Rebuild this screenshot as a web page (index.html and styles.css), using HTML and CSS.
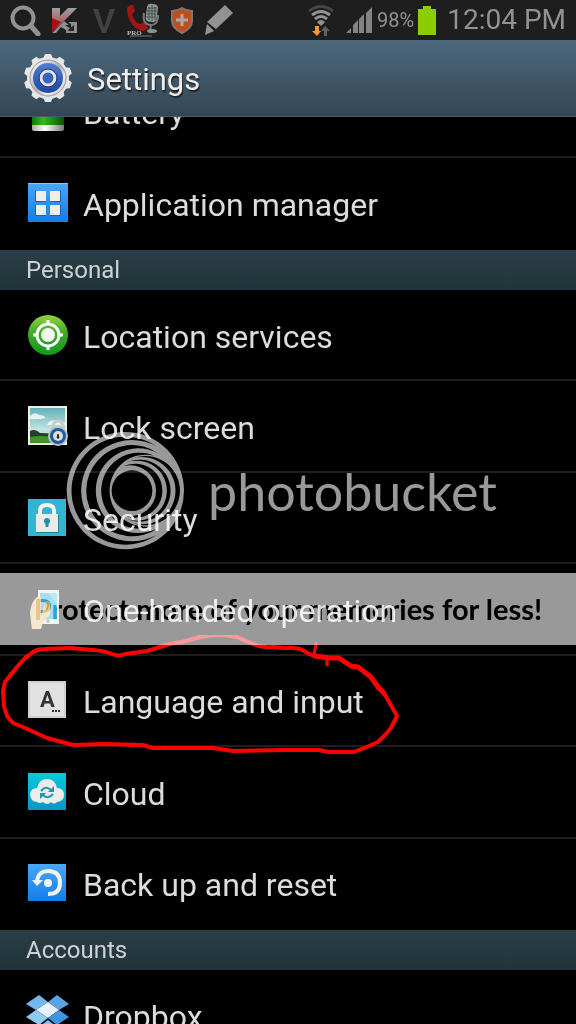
FILE: index.html
```html
<!DOCTYPE html>
<html lang="en">
<head>
<meta charset="utf-8">
<meta name="viewport" content="width=device-width, initial-scale=1">
<title>Settings</title>
<link rel="stylesheet" href="styles.css">
</head>
<body>
<div class="screen">
  <div class="status">
    <div class="status-left">
      <svg width="32" height="32" viewBox="0 0 32 32"><circle cx="14" cy="14" r="10.500" fill="none" stroke="#929292" stroke-width="4"/><path d="M22 22l7 8" stroke="#929292" stroke-width="5" stroke-linecap="round"/></svg>
      <svg width="27" height="28" viewBox="0 0 27 28"><defs><linearGradient id="kas" x2="0" y2="1"><stop offset="0" stop-color="#a0a0a0"/><stop offset=".5" stop-color="#a86b6b"/><stop offset="1" stop-color="#a81414"/></linearGradient></defs><path d="M1 2h8v8l8-8h9L13 15 1 26z" fill="url(#kas)"/><path d="M1 12l9 4-9 10z" fill="#ab1010"/><path d="M1 27l12-12 5 4h-4l6 4v-5l-3-2h9v11H15v-3l-5-3-5 6z" fill="#8e8e8e"/><path d="M17 24l6-5v6h-6z" fill="#222"/></svg>
      <svg width="24" height="28" viewBox="0 0 24 28"><path d="M1 3h5l6 19 6-19h5l-9 24h-4z" fill="#424242"/></svg>
      <svg width="34" height="34" viewBox="0 0 34 34"><path d="M1 5q3-4 6-3l2 6-3 3q2 8 8 10l4-2 4 6-4 3q-7 0-12-7T1 5z" fill="#9e1715"/><rect x="20" y="1" width="11" height="18" rx="4" fill="#8d9494" transform="rotate(8 26 12)"/><path d="M22 5h9M21 8h10M21 11h9M20 14h9M26 2v16M23 4v13M29 4v13" stroke="#455051"/><path d="M18 10q-2 11 6 12t8-10M25 22l-1 6" fill="none" stroke="#777" stroke-width="2"/><ellipse cx="26" cy="28" rx="5" ry="2" fill="#8a8f8f"/><path d="M4 33h22" stroke="#777"/><text x="1" y="32" class="pro">PRO</text></svg>
      <svg width="24" height="28" viewBox="0 0 24 28"><path d="M12 2q5 3 10 3v10q0 7-10 12Q2 22 2 15V5q5 0 10-3z" fill="#bd4e1d" stroke="#85746b" stroke-width="2"/><path d="M12 8v12M6 14h12" stroke="#aaa" stroke-width="3"/></svg>
      <svg width="30" height="32" viewBox="0 0 30 32"><path d="M21 1l8 8-17 16-9-7z" fill="#929292"/><path d="M3 20l7 7-9 4z" fill="#929292"/></svg>
    </div>
    <div class="status-right">
      <svg width="28" height="32" viewBox="0 0 28 32"><path d="M2 7Q14-2 26 7" fill="none" stroke="#454545" stroke-width="3"/><path d="M5 11q9-7 18 0M8 15q6-5 12 0M11 19q3-3 6 0" fill="none" stroke="#929292" stroke-width="3"/><path d="M14 22l-3-3h6z" fill="#929292"/><path d="M17 32v-5h-3l4-5 5 5h-3v5z" fill="#606060"/><path d="M8 22h4v5h2l-4 5-5-5h3z" fill="#f5992e"/></svg>
      <svg class="signal" width="28" height="28" viewBox="0 0 28 28"><path d="M1 27h5v-5zM8 27h5V14l-5 5zM14 27h5V8l-5 5zM21 27h6V1l-6 6z" fill="#838383"/></svg>
      <span class="percent">98%</span>
      <svg width="20" height="30" viewBox="0 0 20 30"><path d="M1 4h5V1h8v3h5v26H1z" fill="#8ccd00"/></svg>
      <span class="clock">12:04 PM</span>
    </div>
  </div>

  <header class="titlebar">
    <svg width="50" height="50" viewBox="0 0 50 50"><defs><linearGradient id="silver" x2="1" y2="1"><stop offset="0" stop-color="#fff"/><stop offset=".3" stop-color="#d7d7d7"/><stop offset=".5" stop-color="#aaa"/><stop offset=".7" stop-color="#eee"/><stop offset="1" stop-color="#bbb"/></linearGradient><linearGradient id="ring" x2="0" y2="1"><stop offset="0" stop-color="#557cd2"/><stop offset="1" stop-color="#1c45a5"/></linearGradient></defs><g fill="#e6e6e6"><circle cx="25" cy="25" r="21"/><g id="teeth"><path id="tooth" d="M20 6l2-5h6l2 5zM20 44l2 5h6l2-5z"/><use href="#tooth" transform="rotate(36 25 25)"/><use href="#tooth" transform="rotate(72 25 25)"/><use href="#tooth" transform="rotate(108 25 25)"/><use href="#tooth" transform="rotate(144 25 25)"/></g></g><circle cx="25" cy="25" r="18" fill="url(#silver)" stroke="#999"/><circle cx="25" cy="25" r="15" fill="url(#ring)"/><circle cx="25" cy="25" r="7" fill="#3962bb" stroke="#e3e3e3" stroke-width="3"/><circle cx="25" cy="25" r="9" fill="none" stroke="#27427c"/></svg>
    <h1>Settings</h1>
  </header>

  <main class="list">
    <nav class="group device">
      <a class="row" href="#battery"><svg width="40" height="40" viewBox="0 0 40 40"><defs><linearGradient id="bat"><stop offset="0" stop-color="#147500"/><stop offset=".35" stop-color="#37b916"/><stop offset="1" stop-color="#0b5200"/></linearGradient><linearGradient id="cap"><stop offset="0" stop-color="#aaa"/><stop offset=".4" stop-color="#fff"/><stop offset="1" stop-color="#777"/></linearGradient></defs><rect x="4" y="2" width="32" height="38" rx="2" fill="url(#cap)"/><path d="M4 8h32v26H4z" fill="url(#bat)"/></svg><span>Battery</span></a>
      <a class="row" href="#apps"><svg width="40" height="40" viewBox="0 0 40 40"><defs><linearGradient id="blue" x2="0" y2="1"><stop offset="0" stop-color="#4ba6f7"/><stop offset="1" stop-color="#107fe8"/></linearGradient></defs><path d="M0 0h40v39H0z" fill="url(#blue)"/><path d="M0 .5h40" stroke="#8cc5f7"/><path d="M7 8h11v11H7zM22 8h11v11H22zM7 22h11v11H7zM22 22h11v11H22z" fill="#1464b3"/><path d="M8 8h10v10H8zM22 8h10v10H22zM8 22h10v10H8zM22 22h10v10H22z" fill="#eeede8"/></svg><span>Application manager</span></a>
    </nav>

    <h2>Personal</h2>
    <nav class="group personal">
      <a class="row" href="#location"><svg width="40" height="40" viewBox="0 0 40 40"><defs><linearGradient id="green" x2="0" y2="1"><stop offset="0" stop-color="#8ed33e"/><stop offset=".5" stop-color="#3aa526"/><stop offset="1" stop-color="#119a1e"/></linearGradient></defs><circle cx="20" cy="20" r="20" fill="url(#green)"/><circle cx="20" cy="20" r="11" fill="none" stroke="#fff" stroke-width="3"/><circle cx="20" cy="20" r="7" fill="#f6f6f6"/><path d="M20 5v5M20 30v5M5 20h5M30 20h5" stroke="#fff" stroke-width="3"/></svg><span>Location services</span></a>
      <a class="row" href="#lock"><svg width="40" height="40" viewBox="0 0 40 40"><defs><linearGradient id="sky" x2="0" y2="1"><stop offset="0" stop-color="#64b0b8"/><stop offset=".6" stop-color="#bfe3e2"/></linearGradient></defs><path d="M0 0h39v39H0z" fill="#eee"/><path d="M2 2h35v35H2z" fill="url(#sky)"/><path d="M2 10q5-5 9-1 5 0 7 3-8 2-16 1zM21 16q4-3 8-1 5 0 8 2v2H19z" fill="#e4f4f3"/><path d="M2 25q5-3 10 2l25 1v9H2z" fill="#263d2c"/><path d="M2 31q12-3 35 2v4H2z" fill="#3e9425"/><path d="M25 23v-3q1-5 5-5t5 5v3" fill="none" stroke="#ccc" stroke-width="3"/><circle cx="30" cy="30" r="10" fill="#bcc3c8"/><circle cx="30" cy="30" r="8" fill="#1f5da3"/><circle cx="30" cy="30" r="5" fill="#dedede"/><path d="M30 28l1 4h-2z" fill="#222" stroke="#222"/></svg><span>Lock screen</span></a>
      <a class="row" href="#security"><svg width="40" height="40" viewBox="0 0 40 40"><path d="M0 1h38v37H0z" fill="#32b5d0"/><path d="M12 18v-5q0-6 7-6t7 6v5" fill="none" stroke="#f5f5f5" stroke-width="4"/><path d="M8 17h23v18H8z" fill="#1c8399"/><path d="M8 16h22v18H8z" fill="#eceae7"/><circle cx="19" cy="23" r="3" fill="#268ca4"/><path d="M19 23v6" stroke="#268ca4" stroke-width="3"/></svg><span>Security</span></a>
      <a class="row" href="#onehand"><svg width="40" height="40" viewBox="0 0 40 40"><path d="M10 1h21v34H10z" fill="#e4e7e8"/><path d="M12 4h17v26H12z" fill="#27a4dc"/><path d="M20 4h9v12z" fill="#62bde6"/><circle cx="20" cy="32" r="2" fill="#888"/><path d="M9 8Q3 13 2 24l2 17h9q1-10 9-15V14q-5-4-6 3l-3 11V8z" fill="#e8c488"/><path d="M16 17q2-7 6-3l-3 8z" fill="#d4962f"/></svg><span>One-handed operation</span></a>
      <a class="row" href="#language"><svg width="40" height="40" viewBox="0 0 40 40"><path d="M0 1h38v37H0z" fill="#cfcfcf"/><path d="M2 3h34v33H2z" fill="#e1e1e1"/><text class="key" x="12" y="27">A</text><path d="M24 31h9" stroke="#333" stroke-width="2" stroke-dasharray="2 1"/></svg><span>Language and input</span></a>
      <a class="row" href="#cloud"><svg width="40" height="40" viewBox="0 0 40 40"><defs><linearGradient id="cyan" x2="0" y2="1"><stop offset="0" stop-color="#08c9dc"/><stop offset="1" stop-color="#0596c4"/></linearGradient></defs><path d="M0 1h38v37H0z" fill="url(#cyan)"/><path d="M9 30q-7-1-7-8 1-6 7-6 2-9 10-9t10 9q7 0 7 7 0 6-7 7-3 3-6 0-4 4-8 0-3 2-6 0z" fill="#ececea"/><path d="M13 19q5-6 10-1M25 22q-5 6-10 1" fill="none" stroke="#2296b0" stroke-width="2"/><path d="M26 14v6h-6zM12 27v-6h6z" fill="#2296b0"/></svg><span>Cloud</span></a>
      <a class="row" href="#backup"><svg width="40" height="40" viewBox="0 0 40 40"><path d="M0 1h38v37H0z" fill="url(#blue)"/><path d="M9 17q2-9 11-9 12 0 12 12 0 11-12 11" fill="none" stroke="#f2f2f2" stroke-width="4"/><path d="M4 17h11l-6 6z" fill="#f2f2f2"/><circle cx="20" cy="20" r="4" fill="#f2f2f2"/></svg><span>Back up and reset</span></a>
    </nav>

    <h2>Accounts</h2>
    <nav class="group accounts">
      <a class="row" href="#dropbox"><svg class="wide" width="44" height="40" viewBox="0 0 44 40"><path d="M13 0l9 7-12 8L0 9z" fill="#74b8ee"/><path d="M31 0l12 9-10 6-11-8z" fill="#58a4e5"/><path d="M22 7l11 8-11 8-12-8z" fill="#e3f2fd"/><path d="M10 15l12 8-9 7-13-8z" fill="#91c9f5"/><path d="M33 15l10 7-12 8-9-7z" fill="#3f94df"/><path d="M9 30l4 2 9-7 9 7 4-2v3l-13 7-13-7z" fill="#86c2ef"/></svg><span>Dropbox</span></a>
    </nav>
  </main>

  <svg class="scribble" width="404" height="120" viewBox="0 635 404 120"><path d="M27 657L33 652Q38 649 45 649L70 648 93 650Q105 651 112 654T125 654L147 651 170 644 182 642 200 637Q220 633 237 637L253 644Q262 648 272 647L286 648Q298 647 304 651T315 656L329 658" stroke-width="4"/><path d="M315 656l14 2h10l12 8 7 1 13 10 7 10 6 6" stroke-width="5"/><path d="M384 693l8 14 5 9-6 12-5 6-8 8-9 4-15 6h-25l-10-2h-33l-53 1-20-3h-60l-10-3-40-1-30 1-26-7-24-11-10-4-6-7-3-10-1-15 2-9 12-15 10-11" stroke-width="4"/><path d="M316 644l-2 11M327 658v7" stroke-width="3"/></svg>

  <aside class="watermark">
    <div class="brand">
      <svg width="128" height="126" viewBox="0 0 384 378"><circle cx="190" cy="188" r="176" fill="#999"/><path d="M283 55A162 162 0 1 0 283 321A152 152 0 1 1 283 55zM290 77A137 137 0 1 0 290 299A127 127 0 1 1 290 77zM276 83A114 114 0 1 0 276 293A108 108 0 1 1 276 83zM215 90A104 104 0 1 1 215 286A101 101 0 1 0 215 90zM195 103A93 93 0 1 1 195 273A90 90 0 1 0 195 103zM185 115A81 81 0 1 1 185 261A76 76 0 1 0 185 115z"/><circle cx="210" cy="188" r="61"/></svg>
      <span>photobucket</span>
    </div>
    <p class="banner">Protect more of your memories for less!</p>
  </aside>
</div>
</body>
</html>
```
FILE: styles.css
```css
* { box-sizing: border-box; }
body { margin: 0; background: #000; color: #dcdcdc; font-family: Roboto, "Liberation Sans", sans-serif; }
svg { flex: none; display: block; }
.screen { position: relative; display: flex; flex-direction: column; height: 100vh; overflow: hidden; isolation: isolate; background: #000; }

.status { display: flex; flex: none; justify-content: space-between; align-items: center; height: 40px; padding: 0 10px 0 9px; background: #1e1e1e; color: #929292; }
.status-left, .status-right { display: flex; align-items: center; }
.status-left { gap: 10px; }
.status-left svg:nth-child(2) { margin-right: 4px; }
.pro { font: bold 7px "Liberation Serif", serif; fill: #bbb; }
.signal { margin: 0 4px 0 10px; }
.percent { margin-right: 3px; font-size: 20px; }
.clock { margin-left: 10px; font-size: 28px; line-height: 40px; }

.titlebar { display: flex; flex: none; align-items: center; gap: 14px; height: 77px; padding: 0 23px; background: linear-gradient(#4c687d, #344654); border-bottom: 1px solid #4a5b68; z-index: 1; }
h1 { margin: 0; padding-top: 4px; font-size: 31px; font-weight: 400; line-height: 40px; color: #eee; text-shadow: 1px 2px 1px #222; }

.list { flex: 1; min-height: 0; }
.group { display: grid; grid-auto-rows: 1fr; }
.device { min-height: 184px; margin-top: -51px; }
.personal { min-height: 640px; }
.accounts { min-height: 92px; }
.row { display: flex; align-items: center; gap: 15px; padding: 0 28px; border-bottom: 2px solid #1e1e1e; color: inherit; font-size: 32px; line-height: 40px; text-decoration: none; }
.row:last-child { border-bottom-color: transparent; }
.row span { padding-top: 4px; }
.row .wide { margin: 0 -2px; }
.key { font: bold 22px Roboto, sans-serif; fill: #333; }
h2 { margin: 0; padding: 0 26px; font-size: 24px; font-weight: 400; line-height: 40px; color: #cfd2d3; background: linear-gradient(#2b3e47, #20343a); }

.scribble { position: absolute; left: 0; top: 635px; fill: none; stroke: #f00; stroke-linecap: round; stroke-linejoin: round; }

.watermark { position: absolute; inset: 0; z-index: 2; padding-top: 428px; mix-blend-mode: screen; pointer-events: none; font-family: Lato, sans-serif; }
.brand { display: flex; align-items: center; gap: 18px; padding-left: 62px; color: #999; font-size: 52px; line-height: 60px; }
.banner { margin: 19px 0 0; background: #999; color: #000; text-align: center; font-size: 29px; font-weight: 700; line-height: 72px; white-space: nowrap; }
```
